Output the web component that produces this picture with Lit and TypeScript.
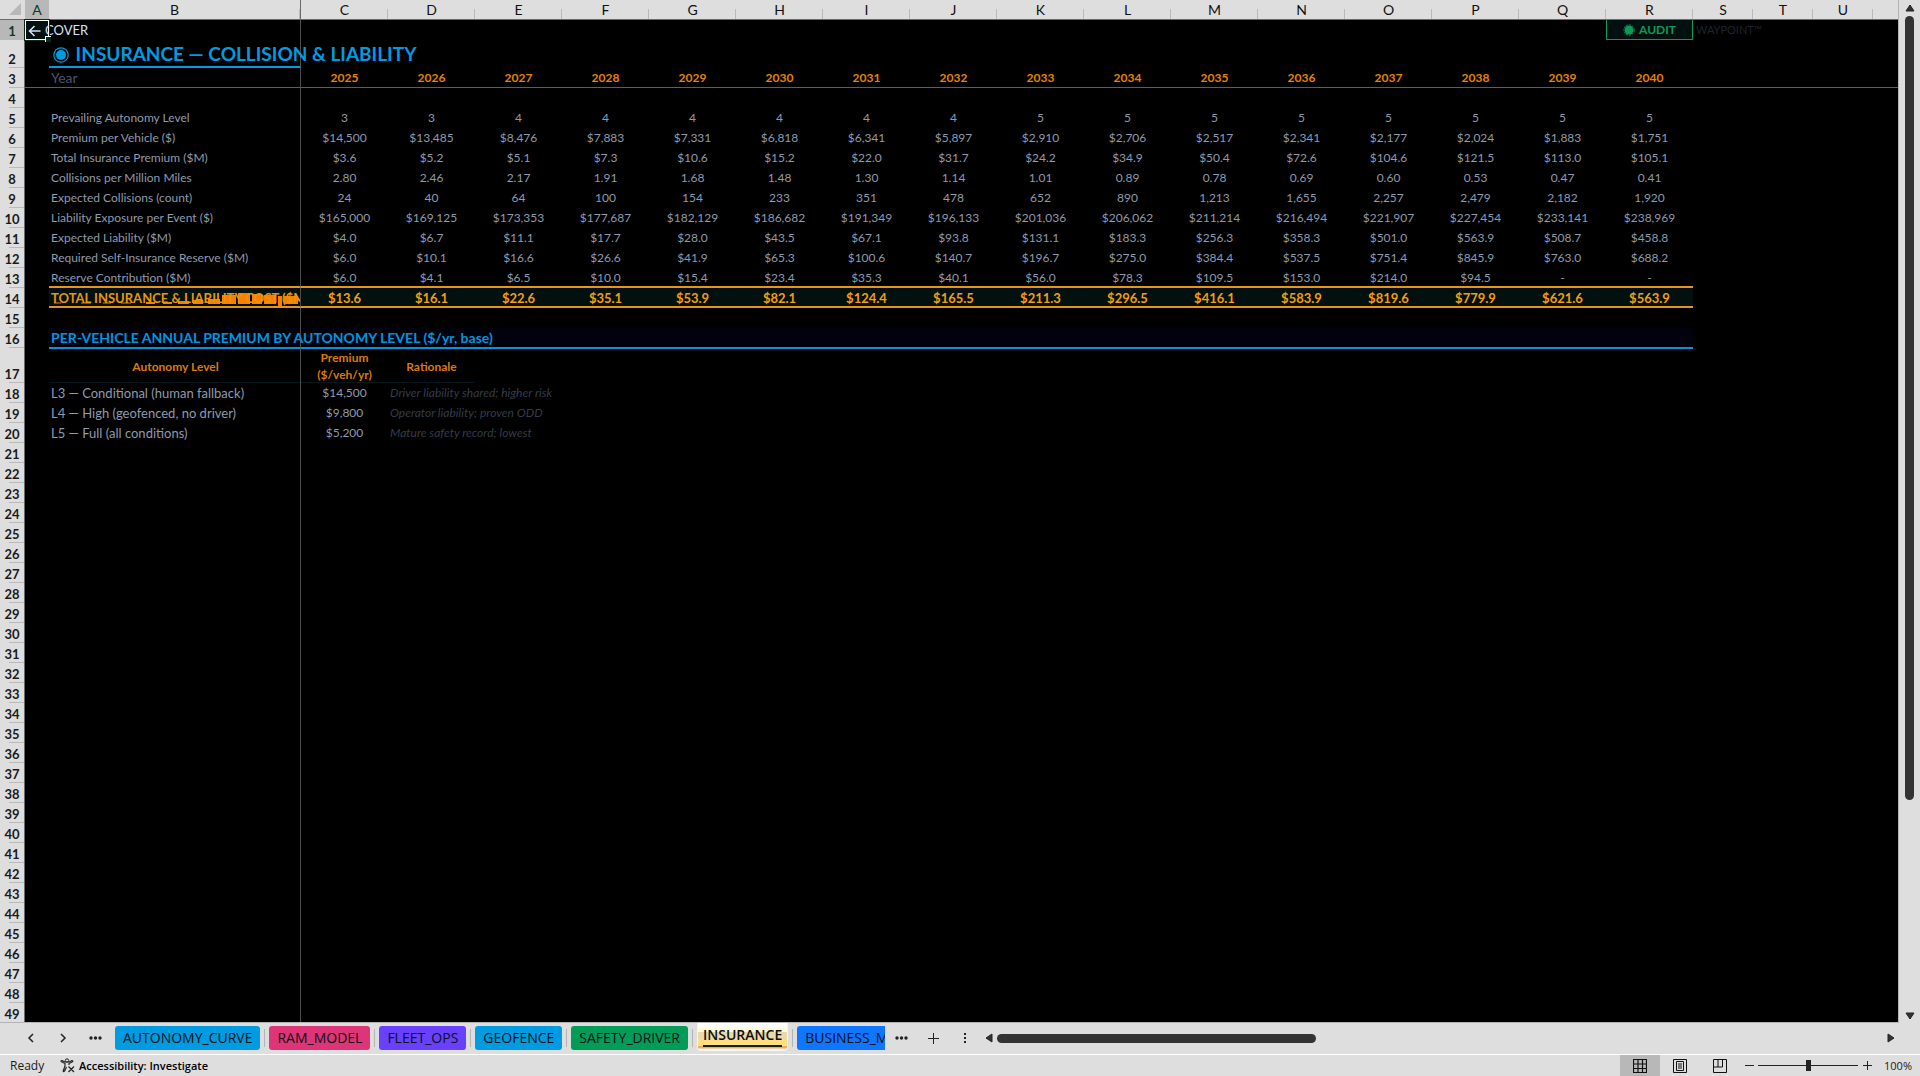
import { LitElement, html, css, svg } from "lit";
import { customElement } from "lit/decorators.js";
import { classMap } from "lit/directives/class-map.js";

const LETTERS = "ABCDEFGHIJKLMNOPQRSTU".split("");
const YEAR_COUNT = 16;
const FIRST_YEAR = 2025;
const ROW_COUNT = 49;
const TOTAL_ROW = 14;

interface MetricRow {
  label: string;
  values: string[];
}

const metric = (label: string, values: string): MetricRow => ({ label, values: values.split(" ") });

const METRICS: Record<number, MetricRow> = {
  5: metric("Prevailing Autonomy Level", "3 3 4 4 4 4 4 4 5 5 5 5 5 5 5 5"),
  6: metric("Premium per Vehicle ($)", "$14,500 $13,485 $8,476 $7,883 $7,331 $6,818 $6,341 $5,897 $2,910 $2,706 $2,517 $2,341 $2,177 $2,024 $1,883 $1,751"),
  7: metric("Total Insurance Premium ($M)", "$3.6 $5.2 $5.1 $7.3 $10.6 $15.2 $22.0 $31.7 $24.2 $34.9 $50.4 $72.6 $104.6 $121.5 $113.0 $105.1"),
  8: metric("Collisions per Million Miles", "2.80 2.46 2.17 1.91 1.68 1.48 1.30 1.14 1.01 0.89 0.78 0.69 0.60 0.53 0.47 0.41"),
  9: metric("Expected Collisions (count)", "24 40 64 100 154 233 351 478 652 890 1,213 1,655 2,257 2,479 2,182 1,920"),
  10: metric("Liability Exposure per Event ($)", "$165,000 $169,125 $173,353 $177,687 $182,129 $186,682 $191,349 $196,133 $201,036 $206,062 $211,214 $216,494 $221,907 $227,454 $233,141 $238,969"),
  11: metric("Expected Liability ($M)", "$4.0 $6.7 $11.1 $17.7 $28.0 $43.5 $67.1 $93.8 $131.1 $183.3 $256.3 $358.3 $501.0 $563.9 $508.7 $458.8"),
  12: metric("Required Self-Insurance Reserve ($M)", "$6.0 $10.1 $16.6 $26.6 $41.9 $65.3 $100.6 $140.7 $196.7 $275.0 $384.4 $537.5 $751.4 $845.9 $763.0 $688.2"),
  13: metric("Reserve Contribution ($M)", "$6.0 $4.1 $6.5 $10.0 $15.4 $23.4 $35.3 $40.1 $56.0 $78.3 $109.5 $153.0 $214.0 $94.5 - -"),
  14: metric("TOTAL INSURANCE & LIABILITY COST ($M)", "$13.6 $16.1 $22.6 $35.1 $53.9 $82.1 $124.4 $165.5 $211.3 $296.5 $416.1 $583.9 $819.6 $779.9 $621.6 $563.9"),
};

const LEVELS: Record<number, [string, string, string]> = {
  18: ["L3 — Conditional (human fallback)", "$14,500", "Driver liability shared; higher risk"],
  19: ["L4 — High (geofenced, no driver)", "$9,800", "Operator liability; proven ODD"],
  20: ["L5 — Full (all conditions)", "$5,200", "Mature safety record; lowest"],
};

@customElement("sheet-grid")
export class SheetGrid extends LitElement {
  static styles = css`
    :host {
      display: block;
      overflow: hidden;
      background: #000;
      border-right: 1px solid #b4b4b4;
      border-bottom: 1px solid #b4b4b4;
    }
    table {
      width: 100%;
      table-layout: fixed;
      border-collapse: separate;
      border-spacing: 0;
      font: 12px/18px Lato, "Open Sans", sans-serif;
      color: #8f9bae;
    }
    .col-head { width: 25px; }
    .col-a { width: 24px; }
    .col-b { width: 252px; }
    .col-year { width: 87px; }
    .col-extra { width: 60px; }
    th, td {
      box-sizing: border-box;
      padding: 0;
      height: 20px;
      white-space: nowrap;
      text-align: left;
      font-weight: normal;
      vertical-align: middle;
    }
    thead th {
      background: linear-gradient(#bababa, #bababa) right bottom / 1px 10px no-repeat #dedede;
      border-bottom: 1px solid #6b6b6b;
      padding-top: 1px;
      color: #111;
      text-align: center;
      font-size: 14px;
      line-height: 18px;
    }
    thead .corner { background: #dedede; padding: 0 4px 2px 0; }
    .corner svg { display: block; margin-left: auto; }
    thead .last { background: #dedede; }
    thead .col-b-head { border-right: 1px solid #6b6b6b; }
    thead .selected { background: #b8b8b8; color: #0c3a24; }
    .row-head {
      background: linear-gradient(#bababa, #bababa) right bottom / 15px 1px no-repeat #dedede;
      border-right: 1px solid #6b6b6b;
      color: #1a1a1a;
      text-align: center;
      font-size: 13px;
      font-weight: bold;
      line-height: 18px;
      vertical-align: bottom;
    }
    .row-head.selected { background: #b8b8b8; color: #0c3a24; }
    .label { padding-left: 2px; border-right: 1px solid #4c4c50; }
    .num { text-align: center; }
    .r2 > * { height: 28px; }
    .r17 > * { height: 35px; }
    .r3 > td { border-bottom: 1px solid #5a5f5f; }
    .active {
      position: relative;
      background: #02100f;
      border: 1px solid #fff;
      outline: 1px solid #0b2a1a;
      padding-left: 2px;
    }
    .active::after {
      content: "";
      position: absolute;
      right: -3px;
      bottom: -3px;
      width: 5px;
      height: 5px;
      background: #0b2a1a;
      border-left: 1px solid #fff;
      border-top: 1px solid #fff;
    }
    .cover { color: #d5e2f6; font-size: 13px; text-decoration: none; display: block; line-height: 16px; }
    .cover-arrow { vertical-align: -2px; margin-right: 4px; }
    .title {
      color: #009be0;
      font-size: 19px;
      line-height: 24px;
      font-weight: bold;
      border-bottom: 2px solid #009be0;
      padding-left: 4px;
      vertical-align: bottom;
    }
    .title-icon { vertical-align: -2px; margin-right: 2px; }
    .year-label { color: #475569; font-size: 14px; }
    .year { color: #e58300; font-weight: bold; }
    .audit-cell { background: #02100f; border: 1px solid #0c9a58; border-top: 0; text-align: center; }
    .audit { color: #0c9a58; font-weight: bold; text-decoration: none; }
    .audit-icon { vertical-align: -2px; margin-right: 4px; }
    .watermark { color: #1c2430; padding-left: 3px; font-size: 11px; }
    .before-total { border-bottom: 2px solid #e8931c; padding-top: 2px; line-height: 16px; }
    .total {
      background: #02100f;
      border-bottom: 2px solid #e8931c;
      color: #f59e0b;
      padding-top: 2px;
      font-size: 13px;
      line-height: 16px;
      font-weight: bold;
    }
    .total.label { position: relative; overflow: hidden; color: #e8960c; }
    .smear { position: absolute; left: 0; top: 0; }
    .total-text { position: relative; }
    .section { background: #02020f; border-bottom: 1px solid #0095dd; padding-top: 1px; line-height: 16px; }
    .section.label { color: #0095dd; font-size: 14px; font-weight: bold; }
    .under-section { border-top: 1px solid #0095dd; }
    .sub {
      background: linear-gradient(#04181c, #04181c) bottom / 100% 1px no-repeat;
      color: #d97b06;
      font-weight: bold;
      text-align: center;
      line-height: 17px;
      white-space: normal;
    }
    .level { font-size: 13px; }
    .note { color: #333d4b; font-style: italic; padding-left: 2px; }
  `;

  private renderHead() {
    return html`<thead>
      <tr>
        <th class="corner" aria-label="Select all"><svg width="12" height="12" viewBox="0 0 12 12"><path d="M12 0V12H0Z" fill="#b8b8b8"/></svg></th>
        ${LETTERS.map((letter) => html`<th scope="col" class=${classMap({ selected: letter === "A", "col-b-head": letter === "B" })}>${letter}</th>`)}
        <th class="last"></th>
      </tr>
    </thead>`;
  }

  private renderBlank(count: number, name = "") {
    return Array.from({ length: count }, () => html`<td class=${name}></td>`);
  }

  private renderTotalLabel(label: string) {
    return html`<svg class="smear" width="251" height="18" viewBox="0 0 251 18" fill="#ff7d00" aria-hidden="true">
        <path d="M5 14.500H12V15.500H5ZM32 14.500H42V15.500H32ZM54 14.500H62V15.500H54ZM72 14.500H82V15.500H72ZM97 14H106V16H97ZM114 14H123V16H114ZM129 13H140V16H129ZM144 12H154V16H144ZM159 11H171V16H159ZM173 7H187V16H173ZM189 5H201V16H189ZM203 6H213V16H203ZM215 7H227V16H215ZM229 8H233V18H229ZM235 8H249V16H235Z"/>
      </svg><span class="total-text">${label}</span>`;
  }

  private renderCells(row: number) {
    if (row === 1) {
      return html`
        <td class="active"><a class="cover" href="#cover"><svg class="cover-arrow" width="13" height="12" viewBox="0 0 13 12" fill="none" stroke="currentColor" stroke-width="1.6"><path d="M12.500 6H1.500M6.500 1 1.500 6 6.500 11"/></svg>COVER</a></td>
        <td class="label"></td>
        ${this.renderBlank(15)}
        <td class="audit-cell"><a class="audit" href="#audit"><svg class="audit-icon" width="12" height="12" viewBox="0 0 12 12"><circle cx="6" cy="6" r="4.5" fill="#0c9a58"/><circle cx="6" cy="6" r="5.2" fill="none" stroke="#0a7a48" stroke-dasharray="2 1"/></svg>AUDIT</a></td>
        <td class="watermark">WAYPOINT™</td>
        ${this.renderBlank(3)}`;
    }
    if (row === 2) {
      return html`<td></td>
        <td class="label title"><svg class="title-icon" width="16" height="16" viewBox="0 0 16 16"><circle cx="8" cy="8" r="7.2" fill="none" stroke="#009be0" stroke-width="1.2"/><circle cx="8" cy="8" r="5" fill="#009be0"/></svg> INSURANCE — COLLISION &amp; LIABILITY</td>
        ${this.renderBlank(20)}`;
    }
    if (row === 3) {
      return html`<td></td>
        <td class="label year-label">Year</td>
        ${Array.from({ length: YEAR_COUNT }, (_, i) => html`<td class="num year">${FIRST_YEAR + i}</td>`)}
        ${this.renderBlank(4)}`;
    }
    const data = METRICS[row];
    if (data) {
      const total = row === TOTAL_ROW;
      const state = { total, "before-total": row === TOTAL_ROW - 1 };
      return html`<td></td>
        <td class=${classMap({ label: true, ...state })}>${total ? this.renderTotalLabel(data.label) : data.label}</td>
        ${data.values.map((value) => html`<td class=${classMap({ num: true, ...state })}>${value}</td>`)}
        ${this.renderBlank(4)}`;
    }
    if (row === 16) {
      return html`<td></td>
        <td class="label section">PER-VEHICLE ANNUAL PREMIUM BY AUTONOMY LEVEL ($/yr, base)</td>
        ${this.renderBlank(YEAR_COUNT, "section")}
        ${this.renderBlank(4)}`;
    }
    if (row === 17) {
      return html`<td></td>
        <td class="label sub under-section">Autonomy Level</td>
        <td class="sub under-section">Premium ($/veh/yr)</td>
        <td class="sub under-section">Rationale</td>
        ${this.renderBlank(14, "under-section")}
        ${this.renderBlank(4)}`;
    }
    const level = LEVELS[row];
    if (level) {
      return html`<td></td>
        <td class="label level">${level[0]}</td>
        <td class="num">${level[1]}</td>
        <td class="note">${level[2]}</td>
        ${this.renderBlank(18)}`;
    }
    return html`<td></td><td class="label"></td>${this.renderBlank(20)}`;
  }

  render() {
    return html`<table>
      <colgroup>
        <col class="col-head" /><col class="col-a" /><col class="col-b" />
        <col class="col-year" span="16" /><col class="col-extra" span="3" /><col />
      </colgroup>
      ${this.renderHead()}
      <tbody>
        ${Array.from({ length: ROW_COUNT }, (_, i) => i + 1).map(
          (row) => html`<tr class="r${row}">
            <th scope="row" class=${classMap({ "row-head": true, selected: row === 1 })}>${row}</th>
            ${this.renderCells(row)}
          </tr>`,
        )}
      </tbody>
    </table>`;
  }
}

const TABS = [
  { name: "AUTONOMY_CURVE", tone: "blue" },
  { name: "RAM_MODEL", tone: "pink" },
  { name: "FLEET_OPS", tone: "violet" },
  { name: "GEOFENCE", tone: "blue" },
  { name: "SAFETY_DRIVER", tone: "green" },
  { name: "INSURANCE", tone: "current" },
  { name: "BUSINESS_MODEL", tone: "royal" },
];

const icon = (width: number, height: number, body: unknown) =>
  html`<svg width=${width} height=${height} viewBox="0 0 ${width} ${height}" fill="none" stroke="#222" aria-hidden="true">${body}</svg>`;

const DOTS = svg`<g fill="#222" stroke="none"><circle cx="2" cy="2" r="1.7"/><circle cx="6.5" cy="2" r="1.7"/><circle cx="11" cy="2" r="1.7"/></g>`;

@customElement("sheet-tabs")
export class SheetTabs extends LitElement {
  static styles = css`
    :host { display: flex; align-items: flex-start; height: 31px; background: #dedede; border-bottom: 1px solid #fff; }
    button { font: inherit; color: inherit; border: 0; padding: 0; margin: 0; background: none; display: flex; align-items: center; justify-content: center; flex: none; }
    .nav { width: 32px; height: 30px; }
    .navs { display: flex; padding-left: 15px; padding-right: 4px; }
    .strip { display: flex; align-items: center; width: 770px; flex: none; overflow: hidden; font: 14px/20px "Open Sans", "Noto Sans", sans-serif; color: #0a0f14; height: 30px; }
    .slot { display: flex; align-items: center; flex: none; height: 30px; }
    .slot::after { content: ""; width: 1px; height: 18px; background: #b4b4b4; margin: 0 4px; }
    .tab { height: 24px; padding: 0 8px; border-radius: 3px; }
    .blue { background: #009be0; }
    .pink { background: #de3578; }
    .violet { background: #6a40ff; }
    .green { background: #009c58; }
    .royal { background: #0f76ff; }
    .current { height: 28px; padding: 0 5px 2px; font-weight: 600; background: linear-gradient(#fff 0 15%, #fffbd8 18% 32%, #ecd9a8 34% 58%, #ffdf7c 62% 84%, #f4a860 86% 94%, #fff 95%); border: 1px solid #f4f4f4; border-top: 0; border-radius: 0 0 4px 4px; align-self: flex-start; }
    .current span { border-bottom: 2px solid #0c2418; line-height: 20px; }
    .tools { display: flex; padding-right: 4px; }
    .scroll { flex: 1; height: 30px; display: flex; align-items: center; gap: 4px; padding-right: 25px; }
    .track { flex: 1; height: 9px; }
    .thumb { width: 36%; height: 9px; border-radius: 5px; background: #333; }
  `;

  render() {
    return html`
      <div class="navs">
        <button class="nav" aria-label="Previous sheet">${icon(8, 10, svg`<path d="M6 1 2 5 6 9" stroke-width="1.5"/>`)}</button>
        <button class="nav" aria-label="Next sheet">${icon(8, 10, svg`<path d="M2 1 6 5 2 9" stroke-width="1.5"/>`)}</button>
        <button class="nav" aria-label="All sheets">${icon(13, 4, DOTS)}</button>
      </div>
      <div class="strip">
        ${TABS.map((tab) => html`<div class="slot"><button class="tab ${tab.tone}"><span>${tab.name}</span></button></div>`)}
      </div>
      <div class="tools">
        <button class="nav" aria-label="More sheets">${icon(13, 4, DOTS)}</button>
        <button class="nav" aria-label="New sheet">${icon(11, 11, svg`<path d="M5.5 0V11M0 5.5H11"/>`)}</button>
        <button class="nav" aria-label="Resize">${icon(4, 12, svg`<path d="M2 1V3M2 5V7M2 9V11" stroke-width="2"/>`)}</button>
      </div>
      <div class="scroll">
        <button aria-label="Scroll left">${icon(8, 10, svg`<path d="M7 1V9L1 5Z" fill="#333"/>`)}</button>
        <div class="track"><div class="thumb"></div></div>
        <button aria-label="Scroll right">${icon(8, 10, svg`<path d="M1 1V9L7 5Z" fill="#333"/>`)}</button>
      </div>`;
  }
}

@customElement("status-bar")
export class StatusBar extends LitElement {
  static styles = css`
    :host { display: flex; align-items: stretch; height: 21px; background: #dedede; color: #1a1a1a; font: 12px/21px "Open Sans", "Noto Sans", sans-serif; }
    .ready { padding-left: 10px; width: 50px; }
    button { font: inherit; color: inherit; border: 0; padding: 0; background: none; display: flex; align-items: center; justify-content: center; gap: 4px; }
    .access { font-weight: 600; font-size: 11px; color: #000; }
    .spacer { flex: 1; }
    .view { width: 40px; }
    .on { background: #b8b8b8; }
    .step { width: 18px; }
    .zoom { appearance: none; width: 100px; margin: 0; height: 21px; background: linear-gradient(#222, #222) center / 100% 1px no-repeat; }
    .zoom::-webkit-slider-thumb { appearance: none; width: 5px; height: 11px; background: #222; }
    .percent { width: 44px; padding-right: 8px; box-sizing: border-box; text-align: right; font-size: 11px; }
  `;

  render() {
    return html`
      <span class="ready">Ready</span>
      <button class="access">${icon(15, 15, svg`<circle cx="7" cy="2.5" r="1.7"/><path d="M1 3.5 5 5.5V8L3 13.5M13 3.5 9 5.5V7M1 3.5Q1 2.5 2 2.5L5 4H9L12 2.5Q13 2.5 13 3.5M3 13.5Q4.500 14 5 12L6.500 9M8.500 8.500 14 14M14 8.500 8.500 14" stroke-width="1.2"/>`)}Accessibility: Investigate</button>
      <span class="spacer"></span>
      <button class="view on" aria-label="Normal view">${icon(14, 14, svg`<path d="M.5 .5H13.500V13.500H.5ZM5 .5V13.500M9.500 .5V13.500M.5 5H13.500M.5 9.500H13.500" stroke="#111" stroke-width="1.2"/>`)}</button>
      <button class="view" aria-label="Page layout">${icon(14, 14, svg`<path d="M.5 .5H13.500V13.500H.5ZM3.500 2.500H10.500V11.500H3.500ZM5 5H9M5 7H9M5 9H9" stroke="#111"/>`)}</button>
      <button class="view" aria-label="Page break preview">${icon(14, 14, svg`<path d="M.5 .5H13.500V13.500H.5ZM5 .5V8M9.500 .5V8M.5 8H9.500" stroke="#111"/>`)}</button>
      <button class="step" aria-label="Zoom out">${icon(9, 9, svg`<path d="M0 4.500H9"/>`)}</button>
      <input class="zoom" type="range" aria-label="Zoom" min="0" max="100" .value=${"50"} />
      <button class="step" aria-label="Zoom in">${icon(9, 9, svg`<path d="M0 4.500H9M4.500 0V9"/>`)}</button>
      <span class="percent">100%</span>`;
  }
}

@customElement("app-root")
export class AppRoot extends LitElement {
  static styles = css`
    :host { display: flex; flex-direction: column; height: 100vh; background: #dedede; }
    .body { display: flex; flex: 1; min-height: 0; }
    sheet-grid { flex: 1; min-width: 0; }
    .rail { width: 21px; display: flex; flex-direction: column; align-items: center; padding: 4px 0 3px; gap: 4px; }
    .rail-button { border: 0; padding: 0; background: none; display: flex; }
    .rail-track { flex: 1; width: 9px; }
    .rail-thumb { height: 79%; border-radius: 5px; background: #333; }
  `;

  render() {
    return html`
      <div class="body">
        <sheet-grid></sheet-grid>
        <div class="rail">
          <button class="rail-button" aria-label="Scroll up">${icon(10, 8, svg`<path d="M5 1 9 7H1Z" fill="#333"/>`)}</button>
          <div class="rail-track"><div class="rail-thumb"></div></div>
          <button class="rail-button" aria-label="Scroll down">${icon(10, 8, svg`<path d="M5 7 9 1H1Z" fill="#333"/>`)}</button>
        </div>
      </div>
      <sheet-tabs></sheet-tabs>
      <status-bar></status-bar>`;
  }
}
